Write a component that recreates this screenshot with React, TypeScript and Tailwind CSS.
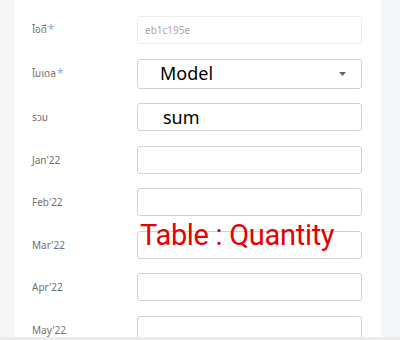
const months = ["Jan'22", "Feb'22", "Mar'22", "Apr'22", "May'22"]

function Label({ text, required }: { text: string; required?: boolean }) {
  return (
    <div className="w-[105px] text-[10px] text-[#707070] leading-none">
      {text}
      {required && <span className="text-[#8fb0d6] text-[12px] align-top ml-[1px]">*</span>}
    </div>
  )
}

export default function App() {
  return (
    <div
      className="relative flex h-[340px] w-[400px] overflow-hidden bg-[#f5f6f8]"
      style={{ fontFamily: '"Noto Sans", "Noto Sans Thai", "Liberation Sans", sans-serif' }}
    >
      <div className="w-[14px] shrink-0" />
      <div className="flex-1 bg-white pt-[16px] pl-[18px] pr-[19px]">
        <div className="flex flex-col gap-[14.5px]">
          <div className="flex items-center">
            <Label text="ไอดี" required />
            <div className="h-[28px] flex-1 rounded-[3px] border border-[#ededed] flex items-center pl-[7px] text-[10px] text-[#a8a8a8]">
              eb1c195e
            </div>
          </div>
          <div className="flex items-center">
            <Label text="โมเดล" required />
            <div className="h-[30px] flex-1 rounded-[3px] border border-[#d2d2d2] flex items-center pl-[22px] pr-[15px] text-[18px] text-black">
              <span className="flex-1">Model</span>
              <svg width="7" height="4" viewBox="0 0 7 4">
                <path d="M0 0h7L3.5 4z" fill="#666" />
              </svg>
            </div>
          </div>
          <div className="flex items-center">
            <Label text="รวม" />
            <div className="h-[28px] flex-1 rounded-[3px] border border-[#d2d2d2] flex items-center pl-[25px] text-[18px] text-black">
              sum
            </div>
          </div>
          {months.map(m => (
            <div key={m} className="flex items-center">
              <Label text={m} />
              <div className="h-[28px] flex-1 rounded-[3px] border border-[#d2d2d2]" />
            </div>
          ))}
        </div>
      </div>
      <div className="w-[19px] shrink-0" />
      <div className="absolute left-[140px] top-[221px] text-[29px] leading-none tracking-[-0.3px] text-[#e60000]" style={{ fontFamily: 'Roboto, sans-serif' }}>
        Table : Quantity
      </div>
      <div className="absolute left-0 bottom-0 h-[3px] w-full bg-[#ececec]" />
    </div>
  )
}
